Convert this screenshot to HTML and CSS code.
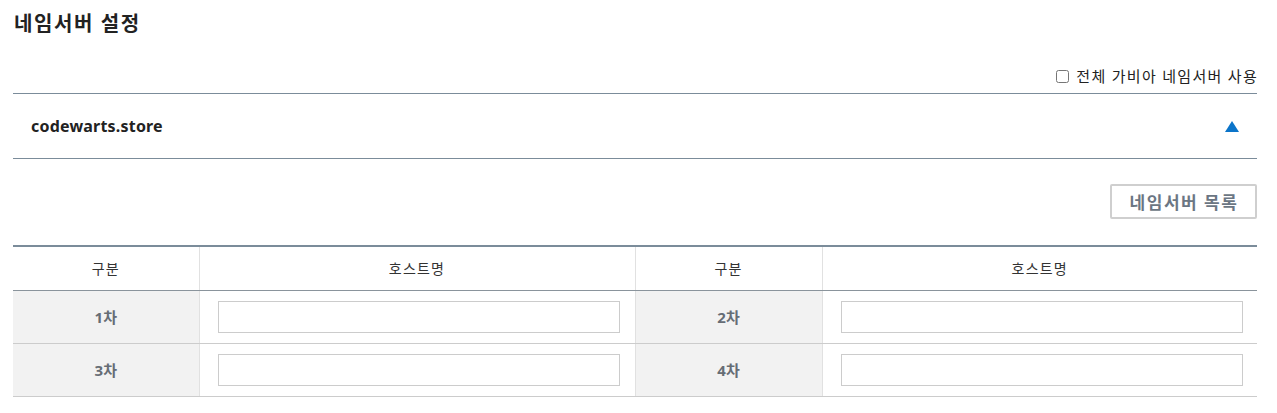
FILE: index.html
```html
<!DOCTYPE html>
<html lang="ko">
<head>
<meta charset="utf-8">
<link rel="stylesheet" href="styles.css">
</head>
<body>
<div class="page">
  <h2 class="title">네임서버 설정</h2>
  <div class="opt-row">
    <label class="opt"><input type="checkbox" class="chk"><span>전체 가비아 네임서버 사용</span></label>
  </div>
  <div class="domain">
    <span class="domain-name">codewarts.store</span>
    <svg class="caret" width="14" height="11" viewBox="0 0 14 11"><polygon points="7,0 14,11 0,11" fill="#0b74c9"/></svg>
  </div>
  <div class="btn-row">
    <button class="btn">네임서버 목록</button>
  </div>
  <table class="ns">
    <colgroup>
      <col style="width:186px"><col style="width:436px"><col style="width:187px"><col style="width:435px">
    </colgroup>
    <thead>
      <tr><th>구분</th><th>호스트명</th><th>구분</th><th>호스트명</th></tr>
    </thead>
    <tbody>
      <tr><td class="lbl">1차</td><td class="inp"><input type="text" class="field"></td><td class="lbl">2차</td><td class="inp"><input type="text" class="field"></td></tr>
      <tr><td class="lbl">3차</td><td class="inp"><input type="text" class="field"></td><td class="lbl">4차</td><td class="inp"><input type="text" class="field"></td></tr>
    </tbody>
  </table>
</div>
</body>
</html>
```
FILE: styles.css
```css
* { box-sizing: border-box; }
body {
  margin: 0;
  background: #fff;
  font-family: "Noto Sans", "Noto Sans CJK KR", sans-serif;
  color: #222;
}
.page {
  padding: 10px 20px 0 13px;
}
.title {
  margin: 0;
  padding-left: 1px;
  font-size: 20px;
  line-height: 28px;
  font-weight: 700;
  letter-spacing: 1.6px;
  color: #222;
}
.opt-row {
  display: flex;
  justify-content: flex-end;
  height: 56px;
  padding-top: 21px;
  border-bottom: 1px solid #7b8c9a;
}
.opt {
  display: flex;
  align-items: center;
  gap: 7px;
  font-size: 15px;
  line-height: 20px;
  letter-spacing: 1.3px;
  color: #222;
}
.opt span { margin-right: -1px; }
.chk {
  margin: 0;
  width: 13px;
  height: 13px;
}
.domain {
  display: flex;
  align-items: center;
  justify-content: space-between;
  height: 65px;
  padding: 0 18px;
  border-bottom: 1px solid #7b8c9a;
}
.domain-name {
  font-size: 16px;
  font-weight: 700;
  letter-spacing: 0.2px;
  color: #222;
}
.caret { display: block; margin-right: 0; }
.btn-row {
  display: flex;
  justify-content: flex-end;
  padding-top: 25px;
  height: 86px;
}
.btn {
  height: 35px;
  width: 147px;
  border: 2px solid #cfcfcf;
  border-radius: 2px;
  background: #fff;
  font-family: "Noto Sans", "Noto Sans CJK KR", sans-serif;
  font-size: 17px;
  font-weight: 700;
  letter-spacing: 1.5px;
  color: #6b7683;
  padding: 0 0 0 1px;
}
.ns {
  width: 1244px;
  border-collapse: collapse;
  table-layout: fixed;
  border-top: 2px solid #7b8c9a;
}
.ns th {
  height: 44px;
  font-size: 14px;
  font-weight: 400;
  letter-spacing: 1.2px;
  color: #333;
  border-bottom: 1px solid #8a949c;
  border-left: 1px solid #e1e1e1;
  padding: 0;
}
.ns th:first-child, .ns td:first-child { border-left: none; }
.ns td {
  height: 53px;
  border-bottom: 1px solid #cccccc;
  border-left: 1px solid #e1e1e1;
  padding: 0;
}
.ns td.lbl {
  background: #f2f2f2;
  text-align: center;
  font-size: 15px;
  font-weight: 700;
  color: #666d75;
}
.ns td.inp {
  padding-left: 18px;
}
.field {
  display: block;
  width: 402px;
  height: 32px;
  border: 1px solid #cccccc;
  margin: 0;
  padding: 0 8px;
  font-size: 14px;
}
```
